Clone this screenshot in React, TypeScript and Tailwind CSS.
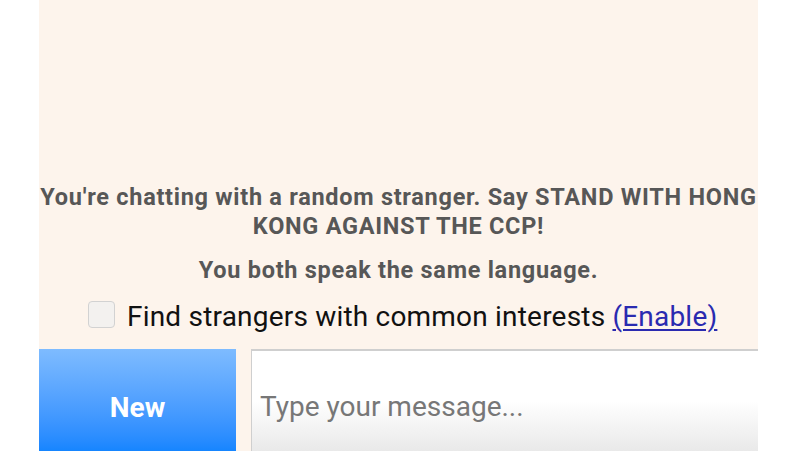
export default function App() {
  const font = { fontFamily: "Roboto, 'Noto Sans', sans-serif" };
  return (
    <div className="w-[800px] h-[451px] bg-white overflow-hidden" style={font}>
      <div className="ml-[39px] w-[719px] h-[451px] bg-[#fdf4ec] flex flex-col">
        {/* status messages */}
        <div className="pt-[183px] flex flex-col items-center text-[#575757] font-bold text-[23.5px] leading-[29px] tracking-[0.72px] text-center">
          <p className="whitespace-nowrap">
            You're chatting with a random stranger. Say STAND WITH HONG
          </p>
          <p className="whitespace-nowrap">KONG AGAINST THE CCP!</p>
          <p className="whitespace-nowrap mt-[15px]">You both speak the same language.</p>
        </div>

        {/* interests toggle */}
        <div className="flex items-center h-[34px] mt-[12px] pl-[49px]">
          <span className="w-[27px] h-[27px] rounded-[4px] border border-[#d2d2d2] bg-[#f3f1ef] shrink-0" />
          <span className="ml-[12px] mt-[6px] text-[28px] tracking-[0.2px] text-[#111] whitespace-nowrap">
            Find strangers with common interests{" "}
            <a className="text-[#2a2ab0] underline underline-offset-[3px] decoration-[2px]" href="#">
              (Enable)
            </a>
          </span>
        </div>

        {/* composer */}
        <div className="mt-[18px] flex flex-1">
          <button className="w-[197px] bg-gradient-to-b from-[#7ebbff] to-[#1585ff] text-white font-bold text-[28px] flex items-center justify-center pt-[16px]">
            New
          </button>
          <div className="ml-[15px] flex-1 border-t-2 border-l border-[#cfcfcf] bg-gradient-to-b from-white from-50% to-[#e9e9e9] flex items-center pl-[8px] pt-[12px]">
            <span className="text-[28px] text-[#777]">Type your message...</span>
          </div>
        </div>
      </div>
    </div>
  );
}
